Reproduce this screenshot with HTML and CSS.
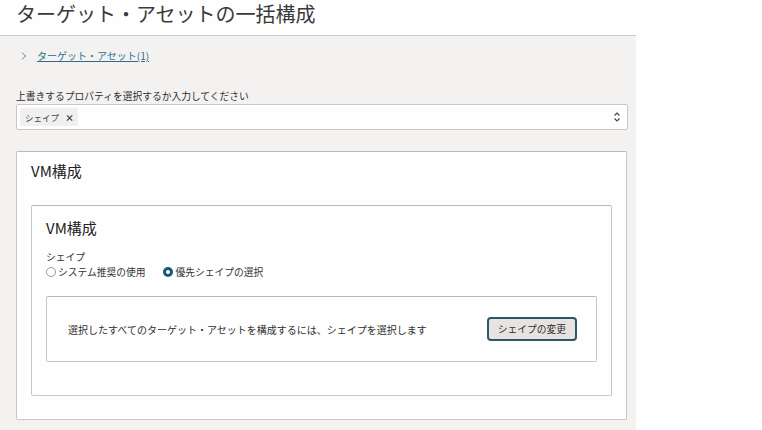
FILE: index.html
```html
<!DOCTYPE html>
<html lang="ja">
<head>
<meta charset="utf-8">
<link rel="stylesheet" href="styles.css">
</head>
<body>
<div class="page">
  <header class="header">
    <h1 class="title">ターゲット・アセットの一括構成</h1>
  </header>
  <main class="main">
    <div class="crumb">
      <svg class="crumb-chev" width="8" height="10" viewBox="0 0 8 10"><path d="M2 1.5 L5.5 5 L2 8.5" fill="none" stroke="#4a7f99" stroke-width="1"/></svg>
      <a class="crumb-link" href="#">ターゲット・アセット(1)</a>
    </div>
    <div class="field-label">上書きするプロパティを選択するか入力してください</div>
    <div class="select">
      <span class="chip">シェイプ<span class="chip-x">×</span></span>
      <svg class="select-arrows" width="8" height="12" viewBox="0 0 8 12"><path d="M1.5 4.5 L4 2 L6.5 4.5 M1.5 7.5 L4 10 L6.5 7.5" fill="none" stroke="#444" stroke-width="1.1"/></svg>
    </div>
    <section class="card outer">
      <h2 class="card-title">VM構成</h2>
      <section class="card inner">
        <h3 class="card-title">VM構成</h3>
        <div class="sub-label">シェイプ</div>
        <div class="radios">
          <span class="radio"><span class="dot"></span>システム推奨の使用</span>
          <span class="radio"><span class="dot on"></span>優先シェイプの選択</span>
        </div>
        <div class="shape-box">
          <span class="shape-text">選択したすべてのターゲット・アセットを構成するには、シェイプを選択します</span>
          <button class="btn">シェイプの変更</button>
        </div>
      </section>
    </section>
  </main>
</div>
</body>
</html>
```
FILE: styles.css
```css
html, body {
  margin: 0;
  padding: 0;
  background: #ffffff;
}
body {
  font-family: "Noto Sans CJK JP", "Noto Sans", sans-serif;
  color: #333333;
}
.page {
  width: 636px;
  height: 430px;
  background: #f3f2f1;
  overflow: hidden;
}
.header {
  height: 35px;
  background: #fefefe;
  border-bottom: 1px solid #cbcaca;
  box-sizing: content-box;
}
.title {
  margin: 0;
  padding: 0 0 0 16px;
  font-size: 20px;
  font-weight: 400;
  line-height: 27px;
  color: #3a3a3a;
}
.main {
  padding: 0 8px 0 16px;
}
.crumb {
  display: flex;
  align-items: center;
  height: 14px;
  margin-top: 13px;
  padding-left: 4px;
}
.crumb-chev {
  margin-right: 9px;
}
.crumb-link {
  font-size: 10px;
  line-height: 14px;
  color: #2d6c8c;
  text-decoration: underline;
}
.field-label {
  margin-top: 27px;
  font-size: 9.75px;
  line-height: 13px;
  color: #2e2e2e;
}
.select {
  margin-top: 1px;
  height: 24px;
  background: #fefefe;
  border: 1px solid #c8c8c8;
  border-radius: 2px;
  display: flex;
  align-items: center;
  padding-left: 3px;
  padding-right: 6px;
}
.chip {
  display: flex;
  align-items: center;
  height: 18px;
  padding: 0 4px 0 5px;
  background: #f1f0ef;
  font-size: 8.5px;
  color: #444;
}
.chip-x {
  margin-left: 6px;
  font-size: 9px;
  font-weight: 700;
  color: #333;
}
.select-arrows {
  margin-left: auto;
}
.card {
  background: #fefefe;
  border: 1px solid #c8c8c8;
  border-top-color: #b9b9b9;
  border-radius: 2px;
}
.outer {
  margin-top: 21px;
  margin-right: 1px;
  height: 267px;
  padding: 0 14px 0 14px;
}
.card-title {
  margin: 0;
  font-size: 15px;
  font-weight: 400;
  line-height: 20px;
  color: #222;
}
.outer > .card-title {
  margin-top: 9px;
}
.inner {
  margin-top: 24px;
  height: 189px;
  padding: 0 14px;
}
.inner > .card-title {
  margin-top: 12px;
}
.sub-label {
  margin-top: 13px;
  font-size: 9.75px;
  line-height: 13px;
}
.radios {
  display: flex;
  align-items: center;
  gap: 18px;
  margin-top: 1px;
  height: 14px;
  font-size: 9.75px;
}
.radio {
  display: flex;
  align-items: center;
  gap: 2px;
}
.dot {
  width: 8px;
  height: 8px;
  border: 1px solid #9a9a9a;
  border-radius: 50%;
  background: #fff;
  box-sizing: content-box;
}
.dot.on {
  width: 4px;
  height: 4px;
  border: 3px solid #15587a;
  background: #fff;
}
.shape-box {
  margin-top: 17px;
  height: 64px;
  border: 1px solid #c6c6c6;
  border-top-color: #b9b9b9;
  border-radius: 2px;
  display: flex;
  align-items: center;
  padding: 0 19px 0 21px;
}
.shape-text {
  font-size: 10px;
  color: #2e2e2e;
}
.btn {
  margin-left: auto;
  height: 24px;
  padding: 0 9px;
  font-family: inherit;
  font-size: 9.75px;
  color: #2e2e2e;
  background: #e6e3e0;
  border: 2px solid #2d5668;
  border-radius: 4px;
}
```
